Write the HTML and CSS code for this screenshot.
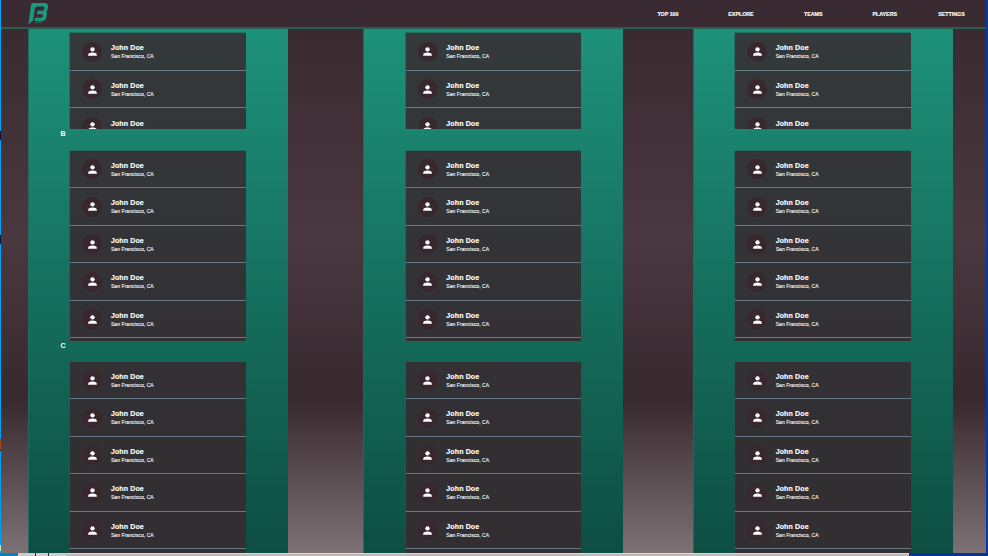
FILE: index.html
```
<!DOCTYPE html>
<html lang="en">
<head>
<meta charset="utf-8">
<title>Players</title>
<link rel="stylesheet" href="styles.css">
</head>
<body>
<div class="desktop">
  <div class="edge edge-left"><i class="mark m1"></i><i class="mark m2"></i><i class="mark m3"></i><i class="mark m4"></i></div>
  <div class="window">
    <header class="header">
      <svg class="logo" viewBox="0 0 22 24">
        <path d="M4 1H18L20 3V6L18.500 10L19 12L18 17L15.500 19H6.500L7 15.800H13.500L14.800 14.500V12.200H8.800L9.500 8.800H15L16.200 7.500V5L15.500 4.400H8.700L7 6L5 18.500L0.500 22.500L3 3Z"/>
        <path class="logo-sub" d="M7 19.800H14V21H7Z"/>
      </svg>
      <nav class="nav"><a>TOP 100</a><a>EXPLORE</a><a>TEAMS</a><a>PLAYERS</a><a>SETTINGS</a></nav>
    </header>
    <main class="columns" id="columns"></main>
  </div>
  <div class="edge edge-right"></div>
  <div class="taskbar"><i class="start"></i><i class="buttons"></i><i class="bar"></i><i class="tray"></i></div>
</div>
<script src="main.js"></script>
</body>
</html>
```
FILE: styles.css
```
* { box-sizing: border-box; }
body { margin: 0; width: 988px; height: 556px; overflow: hidden; font-family: "Liberation Sans", Arial, sans-serif; color: #fff; }
.desktop { display: grid; grid-template-columns: 1px 985px 2px; grid-template-rows: 553px 3px; height: 556px; }
.edge-left { background: #069ff2; position: relative; }
.edge-right { background: #0739a0; }
.mark { position: absolute; left: 0; width: 1px; background: #07163c; }
.m1 { top: 131px; height: 9px; }
.m2 { top: 235px; height: 9px; }
.m3 { top: 439px; height: 12px; background: #a44416; border-bottom: 1px solid #07163c; }
.m4 { top: 545px; height: 6px; background: #b8f0c8; }
.window { height: 553px; overflow: hidden; background: linear-gradient(#38292f 0, #3a2b31 29px, #49383f 240px, #38292f 400px, #7d7175 553px); }
.header { display: flex; height: 28px; background: linear-gradient(#3a2a31 27px, #28604f 27px); }
.logo { width: 22px; height: 24px; margin: 2px 0 0 27px; fill: #1b997f; flex: none; }
.logo-sub { fill: #28675a; }
.nav { display: grid; grid-template-columns: 73px 73px 71.5px 71.5px 62px; margin-left: 581.5px; align-items: center; text-align: center; font-size: 5.3px; font-weight: bold; -webkit-text-stroke: .15px #fff; }
.nav a { padding-top: .5px; }
.columns { display: flex; padding-left: 27px; height: 525px; border-top: 1px solid #28604f; }
.column { flex: none; width: 260px; height: 524px; padding: 4.4px 41.4px 0; background: linear-gradient(#1e917a, #0d4e42); border-left: 1px solid #226b5c; overflow: hidden; }
.column:nth-child(2) { margin-left: 75.4px; }
.column:nth-child(3) { margin-left: 69.6px; padding-left: 41.2px; }
.card { width: 175.5px; height: 190.5px; overflow: hidden; background: #333135; box-shadow: -.5px -.5px 0 #285650; }
.card.first { height: 95.5px; background: linear-gradient(#34393b, #333639); }
.card.second { background: linear-gradient(#333639, #333135); }
.card.third { height: 191.5px; background: linear-gradient(#333135, #322e31); }
.label { height: 22px; margin-left: -10px; padding-top: 1px; font-size: 7px; line-height: 8px; font-weight: bold; }
.label.later { height: 20.5px; padding-top: .5px; }
.row { display: flex; align-items: center; height: 37.5px; border-bottom: 1px solid #667984; }
.clipped { height: 22px; align-items: flex-start; padding-top: 8.5px; border: 0; }
.avatar { display: flex; align-items: center; justify-content: center; flex: none; width: 20px; height: 20px; margin-left: 12px; border-radius: 50%; background: #39272e; }
.avatar svg { width: 13px; height: 13px; fill: #fff; }
.clipped .avatar svg { margin-top: -1px; }
.info { margin-left: 8.5px; padding-top: .5px; white-space: nowrap; }
.clipped .info { padding-top: 2px; }
.name { font-size: 7px; line-height: 9px; font-weight: bold; letter-spacing: .14px; -webkit-text-stroke: .15px #fff; }
.place { font-size: 5px; line-height: 8px; letter-spacing: .07px; -webkit-text-stroke: .1px #fff; }
.taskbar { grid-column: 1 / 4; display: grid; grid-template-columns: 18px 48px 843px 79px; }
.start { background: #0785ba; }
.buttons { background: linear-gradient(90deg, transparent 17px, #333 17px, #333 18px, transparent 18px, transparent 30px, #333 30px, #333 31px, transparent 31px), #cfcdca; }
.bar { background: linear-gradient(#dedbd7 1px, #bbb9b5 1px); }
.tray { background: #06358f; }
```
FILE: main.js
```
const avatar = `<div class="avatar"><svg viewBox="0 0 24 24"><circle cx="12" cy="8" r="4"/><path d="M4 20v-2c0-2.800 5.300-4 8-4s8 1.200 8 4v2z"/></svg></div>`;
const name = `<div class="name">John Doe</div>`;
const row = `<div class="row">${avatar}<div class="info">${name}<div class="place">San Francisco, CA</div></div></div>`;
const clipped = `<div class="row clipped">${avatar}<div class="info">${name}</div></div>`;
const card = (kind, content) => `<div class="card ${kind}">${content}</div>`;
document.getElementById("columns").innerHTML = [0, 1, 2].map(i =>
  `<section class="column">${card("first", row.repeat(2) + clipped)}<div class="label">${i ? "" : "B"}</div>${card("second", row.repeat(5))}<div class="label later">${i ? "" : "C"}</div>${card("third", row.repeat(5))}</section>`
).join("");
```
